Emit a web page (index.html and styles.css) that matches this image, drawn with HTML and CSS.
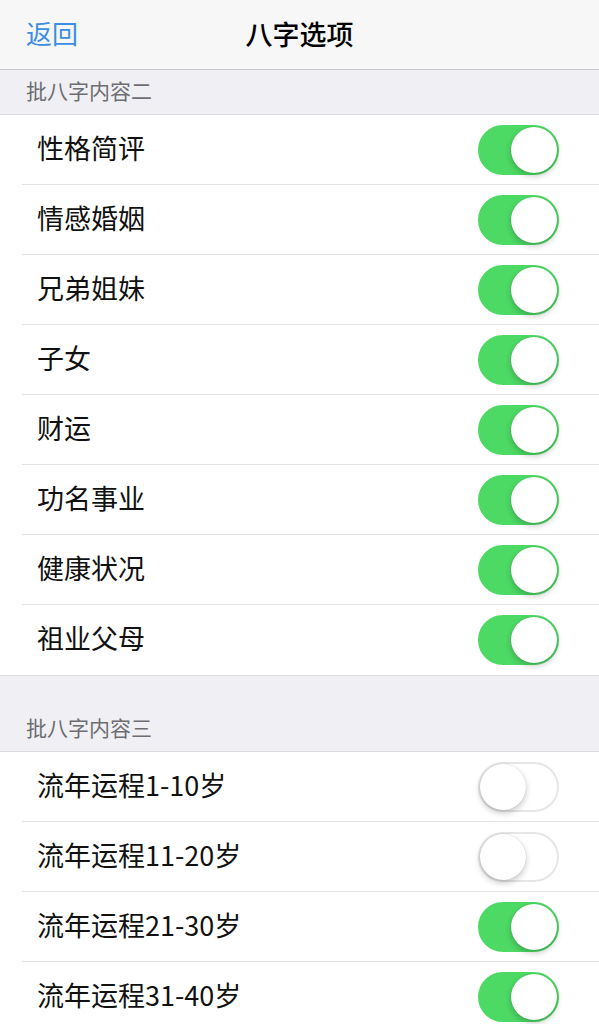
FILE: index.html
```html
<!DOCTYPE html>
<html lang="zh-CN">
<head>
    <meta charset="UTF-8">
    <meta name="viewport" content="width=device-width, initial-scale=1.0">
    <title>八字选项</title>
    <link rel="stylesheet" href="styles.css">
</head>
<body>

<div class="navbar">
    <a class="back" href="#">返回</a>
    <div class="title">八字选项</div>
</div>

<div class="section-header first">批八字内容二</div>
<div class="group">
    <div class="row"><span class="label">性格简评</span><span class="switch on"><span class="knob"></span></span></div>
    <div class="row"><span class="label">情感婚姻</span><span class="switch on"><span class="knob"></span></span></div>
    <div class="row"><span class="label">兄弟姐妹</span><span class="switch on"><span class="knob"></span></span></div>
    <div class="row"><span class="label">子女</span><span class="switch on"><span class="knob"></span></span></div>
    <div class="row"><span class="label">财运</span><span class="switch on"><span class="knob"></span></span></div>
    <div class="row"><span class="label">功名事业</span><span class="switch on"><span class="knob"></span></span></div>
    <div class="row"><span class="label">健康状况</span><span class="switch on"><span class="knob"></span></span></div>
    <div class="row"><span class="label">祖业父母</span><span class="switch on"><span class="knob"></span></span></div>
</div>

<div class="section-header">批八字内容三</div>
<div class="group">
    <div class="row"><span class="label">流年运程1-10岁</span><span class="switch"><span class="knob"></span></span></div>
    <div class="row"><span class="label">流年运程11-20岁</span><span class="switch"><span class="knob"></span></span></div>
    <div class="row"><span class="label">流年运程21-30岁</span><span class="switch on"><span class="knob"></span></span></div>
    <div class="row"><span class="label">流年运程31-40岁</span><span class="switch on"><span class="knob"></span></span></div>
</div>

</body>
</html>
```

FILE: styles.css
```css
body {
    margin: 0;
    padding: 0;
    background-color: #efeff4;
    font-family: "Noto Sans CJK SC", "Noto Sans", sans-serif;
    color: #111;
}
.navbar {
    position: relative;
    height: 69px;
    background-color: #f7f7f7;
    border-bottom: 1px solid #c8c7cc;
    display: flex;
    align-items: center;
    justify-content: center;
}
.back {
    position: absolute;
    left: 26px;
    top: 13px;
    font-size: 26px;
    color: #3b8ee2;
    text-decoration: none;
    line-height: 40px;
}
.title {
    font-size: 27px;
    font-weight: 500;
    color: #000;
    padding-bottom: 2px;
}
.section-header {
    padding: 37px 0 9px 26px;
    font-size: 21px;
    line-height: 29px;
    color: #6d6d72;
    border-bottom: 1px solid #dcdce0;
}
.section-header.first {
    padding-top: 6px;
    padding-bottom: 9px;
}
.group {
    background-color: #fff;
    border-bottom: 1px solid #dcdce0;
}
.row {
    position: relative;
    height: 70px;
    display: flex;
    align-items: center;
    justify-content: space-between;
    padding: 0 40px 0 37px;
}
.row::after {
    content: "";
    position: absolute;
    left: 22px;
    right: 0;
    bottom: 0;
    height: 1px;
    background-color: #e3e3e6;
}
.row:last-child::after {
    display: none;
}
.label {
    font-size: 27px;
    line-height: 36px;
    padding-bottom: 4px;
    color: #111;
}
.switch {
    position: relative;
    width: 81px;
    height: 50px;
    border-radius: 25px;
    box-sizing: border-box;
    background-color: #fff;
    border: 2px solid #e6e6e6;
}
.switch.on {
    background-color: #4cd964;
    border-color: #4cd964;
}
.knob {
    position: absolute;
    top: 0;
    left: 0;
    width: 46px;
    height: 46px;
    border-radius: 50%;
    background-color: #fff;
    box-shadow: 0 3px 6px rgba(0, 0, 0, 0.22), 0 0 1px rgba(0, 0, 0, 0.2);
}
.switch.on .knob {
    left: 31px;
}
```
